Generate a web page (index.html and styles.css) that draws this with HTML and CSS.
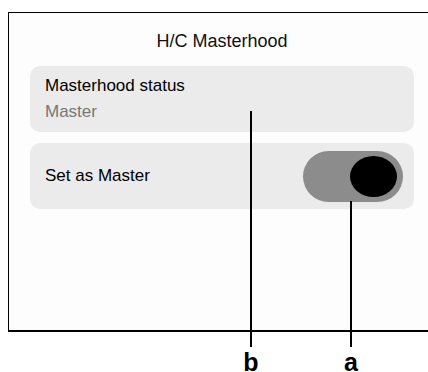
FILE: index.html
```html
<!DOCTYPE html>
<html lang="en">
<head>
    <meta charset="UTF-8">
    <title>H/C Masterhood</title>
    <link rel="stylesheet" href="styles.css">
</head>
<body>
    <div class="screen">
        <h2 class="title">H/C Masterhood</h2>

        <div class="card info">
            <div class="label">Masterhood status</div>
            <div class="value">Master</div>
        </div>

        <div class="card row">
            <div class="label">Set as Master</div>
            <div class="toggle">
                <div class="knob"></div>
            </div>
        </div>
    </div>

    <div class="callout callout-b">
        <div class="leader"></div>
        <span class="tag">b</span>
    </div>
    <div class="callout callout-a">
        <div class="leader"></div>
        <span class="tag">a</span>
    </div>
</body>
</html>
```

FILE: styles.css
```css
html, body {
    margin: 0;
    height: 372px;
    overflow: hidden;
}
body {
    position: relative;
    background-color: #ffffff;
    font-family: "Liberation Sans", Arial, sans-serif;
    color: #000;
}
.screen {
    box-sizing: border-box;
    margin: 12px 0 0 8px;
    width: 428px;
    height: 320px;
    padding: 17px 21px 0 21px;
    border: 1px solid #000;
    border-bottom-width: 2px;
    background-color: #fdfdfd;
}
.title {
    margin: 0 0 14px 0;
    font-size: 18px;
    line-height: 22px;
    font-weight: normal;
    text-align: center;
    color: #111;
}
.card {
    width: 384px;
    box-sizing: border-box;
    background-color: #ebebeb;
    border-radius: 10px;
}
.info {
    padding: 10px 15px;
    height: 66px;
}
.label {
    font-size: 17px;
    line-height: 20px;
}
.value {
    margin-top: 6px;
    font-size: 17px;
    line-height: 20px;
    color: #777;
}
.row {
    margin-top: 11px;
    height: 66px;
    padding: 0 11px 0 15px;
    display: flex;
    align-items: center;
    justify-content: space-between;
}
.toggle {
    box-sizing: border-box;
    width: 100px;
    height: 51px;
    padding: 5px 6px;
    border-radius: 26px;
    background-color: #8c8c8c;
    display: flex;
    justify-content: flex-end;
}
.knob {
    width: 47px;
    height: 41px;
    border-radius: 50%;
    background-color: #000;
}

/* annotation markers */
.callout {
    position: absolute;
    width: 30px;
    display: flex;
    flex-direction: column;
    align-items: center;
}
.callout-b {
    left: 236px;
    top: 111px;
}
.callout-a {
    left: 336px;
    top: 201px;
}
.leader {
    width: 2px;
    background-color: #000;
}
.callout-b .leader {
    height: 236px;
}
.callout-a .leader {
    height: 146px;
}
.tag {
    margin-top: 1px;
    font-size: 25px;
    line-height: 29px;
    font-weight: bold;
}
```
